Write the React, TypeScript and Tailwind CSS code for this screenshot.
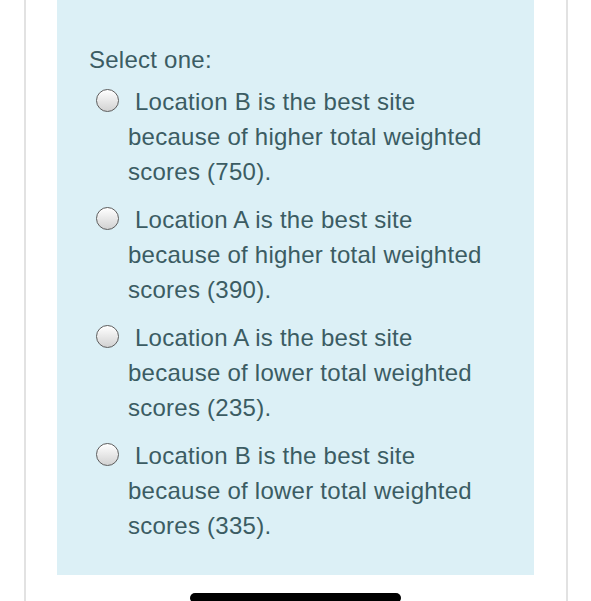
const options = [
  ["Location B is the best site", "because of higher total weighted", "scores (750)."],
  ["Location A is the best site", "because of higher total weighted", "scores (390)."],
  ["Location A is the best site", "because of lower total weighted", "scores (235)."],
  ["Location B is the best site", "because of lower total weighted", "scores (335)."],
]

function Radio() {
  return (
    <span className="relative top-[-3px] ml-[-32px] mr-[16px] inline-block h-[23px] w-[23px] rounded-full border-[1.5px] border-[#5c5c5c] bg-gradient-to-b from-[#ffffff] to-[#d2d2d2] align-middle shadow-[inset_0_1px_1px_rgba(255,255,255,0.9)]" />
  )
}

export default function App() {
  return (
    <div className="h-[601px] w-[591px] overflow-hidden bg-white font-['Liberation_Sans',Arial,sans-serif]">
      <div className="ml-[24px] h-full w-[544px] border-x-2 border-[#e2e2e2]">
        <div className="ml-[31px] w-[477px] bg-[#dcf0f6] pt-[42px] pb-[32px] pl-[32px] text-[24px] leading-[35px] tracking-[0.25px] text-[#3b5c63]">
          <div>Select one:</div>
          <div className="mt-[7px] flex flex-col gap-[13px]">
            {options.map((lines, i) => (
              <div key={i} className="pl-[39px]">
                <div>
                  <Radio />
                  {lines[0]}
                </div>
                <div>{lines[1]}</div>
                <div>{lines[2]}</div>
              </div>
            ))}
          </div>
        </div>
        <div className="ml-[164px] mt-[18px] h-[10px] w-[211px] rounded-full bg-black" />
      </div>
    </div>
  )
}
